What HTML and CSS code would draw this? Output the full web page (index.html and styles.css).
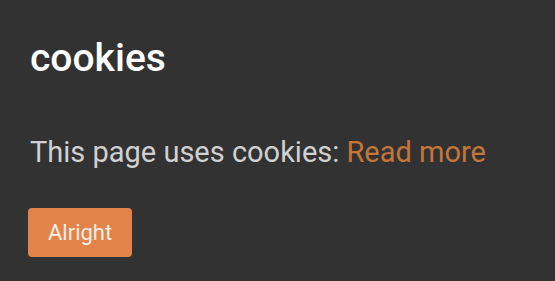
FILE: index.html
```html
<!DOCTYPE html>
<html lang="en">
<head>
    <meta charset="UTF-8">
    <meta name="viewport" content="width=device-width, initial-scale=1.0">
    <title>cookies</title>
    <link rel="stylesheet" href="styles.css">
</head>
<body>
    <div class="cookie-box">
        <h1>cookies</h1>
        <p>This page uses cookies: <a href="#">Read more</a></p>
        <button class="btn">Alright</button>
    </div>
</body>
</html>
```

FILE: styles.css
```css
/* page */
body {
    margin: 0;
    background: #323232;
    font-family: Roboto, "Liberation Sans", sans-serif;
}

/* box */
.cookie-box {
    padding: 30px 30px;
}

h1 {
    margin: 6px 0 0;
    color: #fff;
    font-size: 39px;
    font-weight: 500;
    line-height: 44px;
}

p {
    margin: 55px 0 0;
    color: #d0d0d0;
    font-size: 29px;
    line-height: 34px;
}

p a {
    color: #c47539;
    text-decoration: none;
}

/* button */
.btn {
    margin: 39px 0 0 -2px;
    padding: 0 20px;
    height: 49px;
    border: none;
    border-radius: 4px;
    background: #e2834a;
    color: #fbeee6;
    font-family: inherit;
    font-size: 22px;
    font-weight: 400;
}
```
